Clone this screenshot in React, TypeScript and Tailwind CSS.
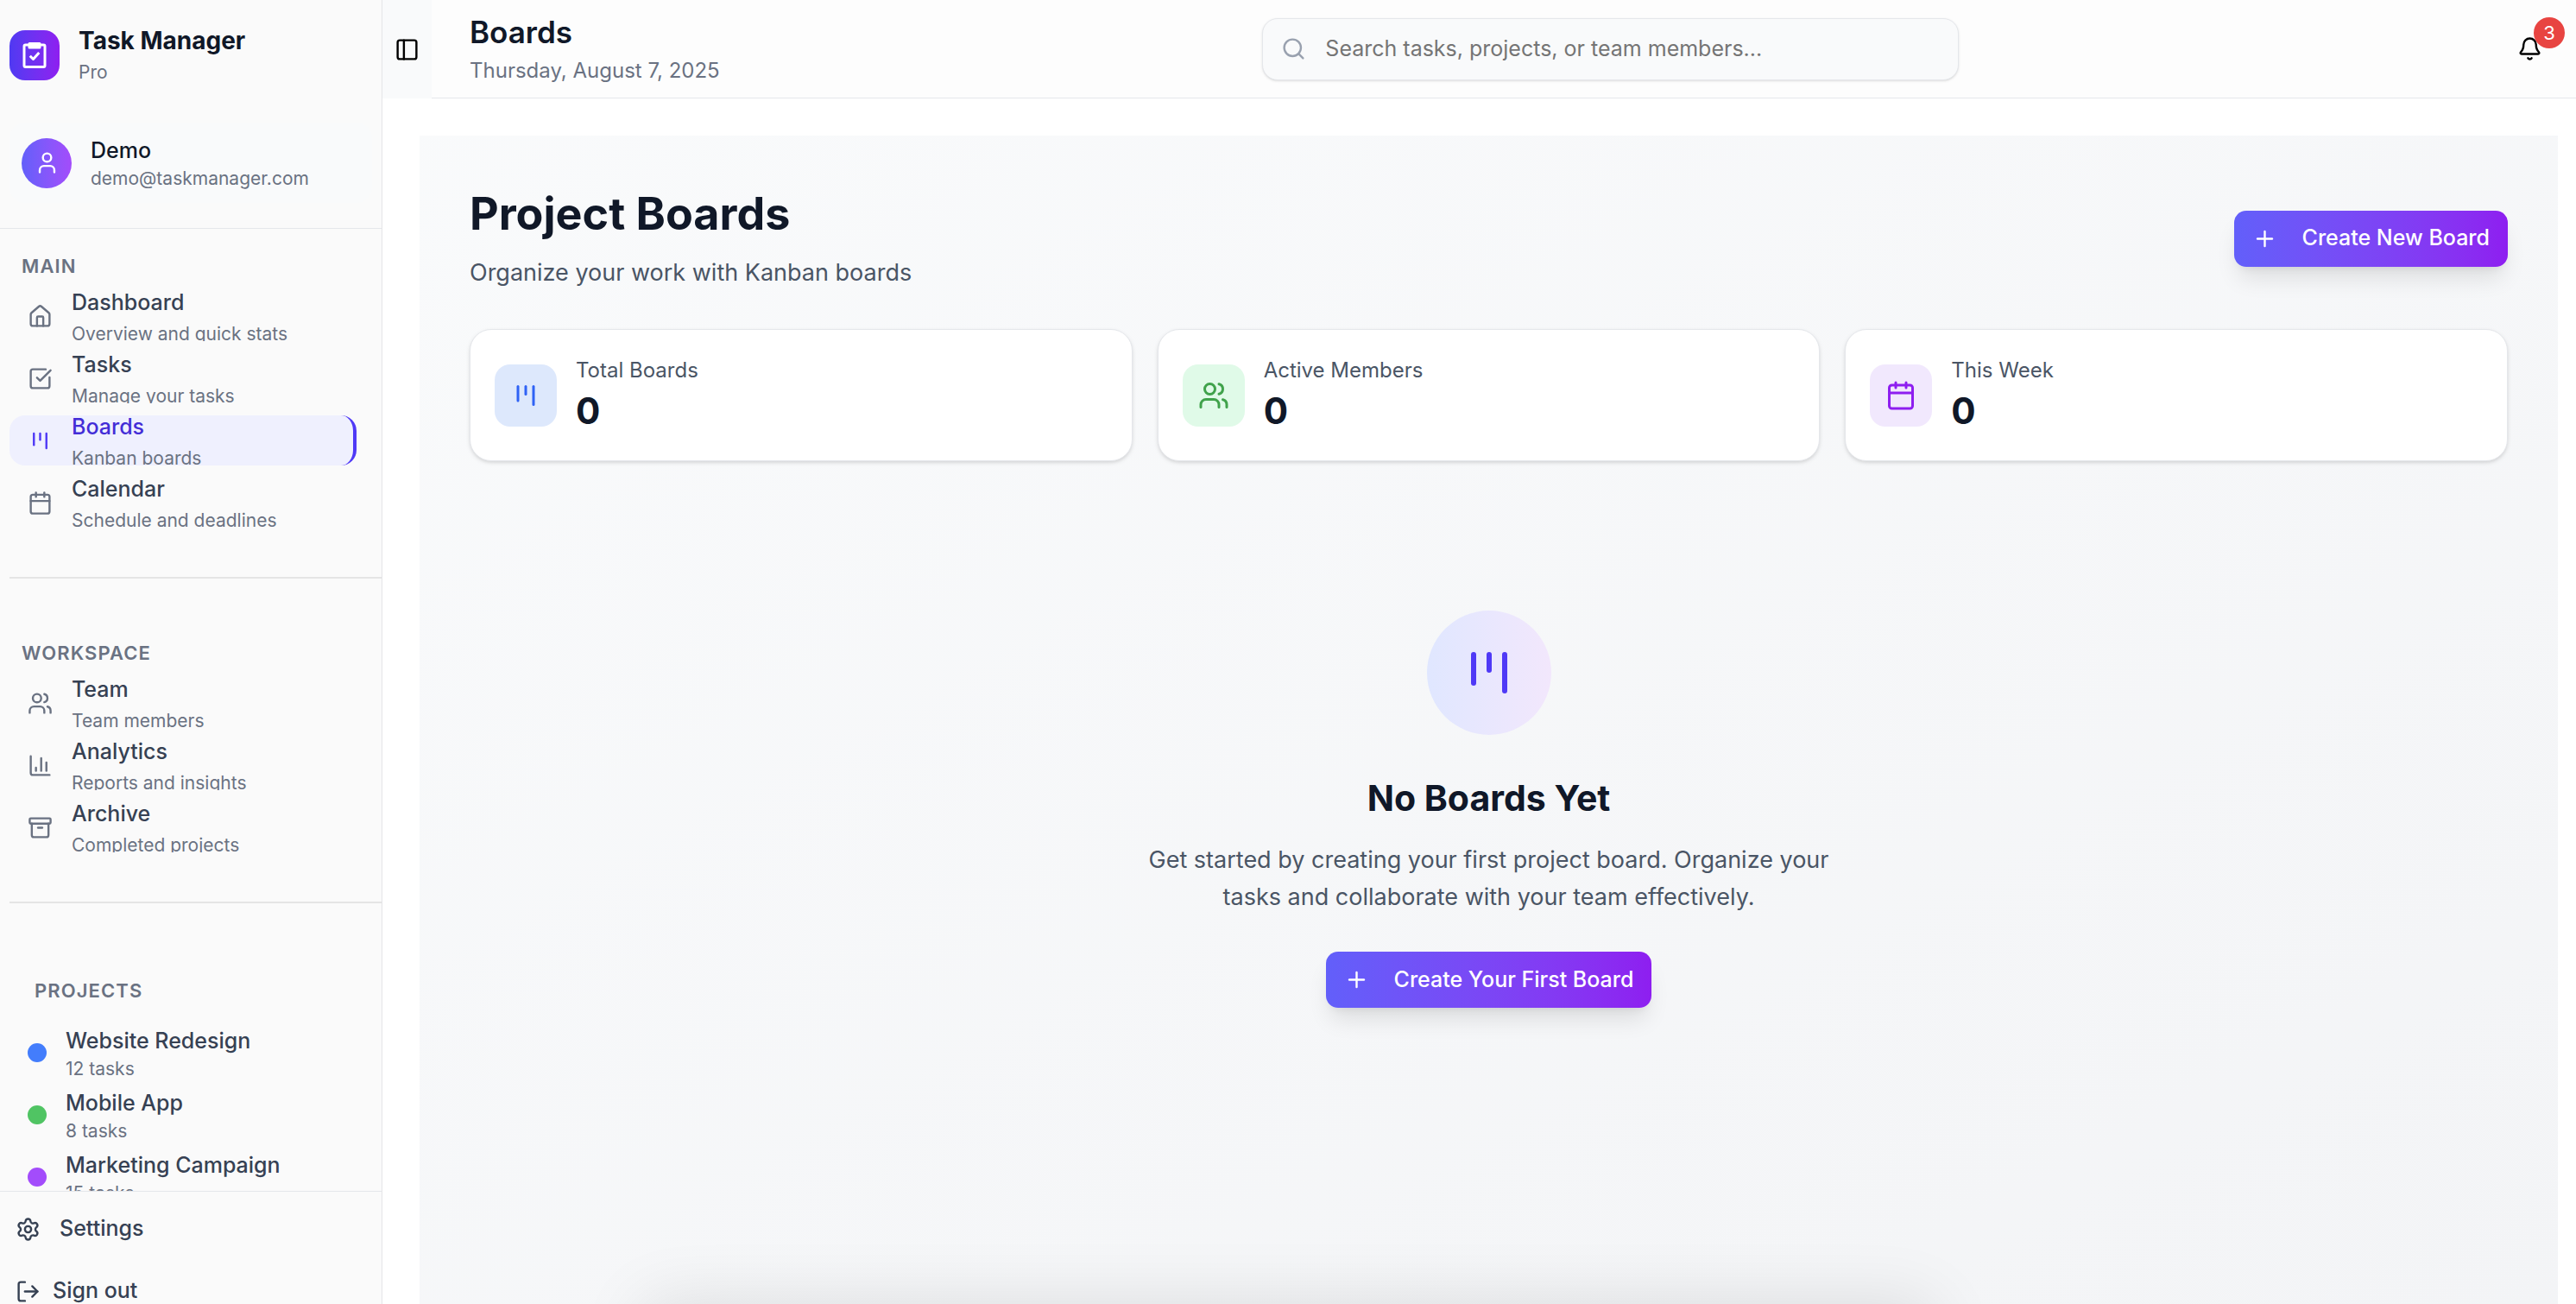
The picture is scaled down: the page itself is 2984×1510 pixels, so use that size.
import type { ReactNode } from "react";
import {
  Archive,
  Bell,
  Calendar,
  House,
  LogOut,
  PanelLeft,
  Plus,
  Search,
  Settings,
  SquareCheckBig,
  User,
  Users,
} from "lucide-react";

type IconProps = { className?: string };

const strokeProps = {
  viewBox: "0 0 24 24",
  fill: "none",
  stroke: "currentColor",
  strokeWidth: 2,
  strokeLinecap: "round" as const,
  strokeLinejoin: "round" as const,
  "aria-hidden": true,
};

function KanbanIcon({ className }: IconProps) {
  return (
    <svg {...strokeProps} className={className}>
      <path d="M6 5v11" />
      <path d="M12 5v6" />
      <path d="M18 5v14" />
    </svg>
  );
}

function ChartIcon({ className }: IconProps) {
  return (
    <svg {...strokeProps} className={className}>
      <path d="M3 3v16a2 2 0 0 0 2 2h16" />
      <path d="M18 17V9" />
      <path d="M13 17V5" />
      <path d="M8 17v-3" />
    </svg>
  );
}

function LogoIcon({ className }: IconProps) {
  return (
    <svg {...strokeProps} strokeLinecap="butt" className={className}>
      <rect x="4" y="4" width="16" height="17" rx="1" />
      <path d="M8 3h8v3H8z" fill="currentColor" />
      <path d="m8.500 12.500 2.500 2.500 4.500-5" />
    </svg>
  );
}

type NavEntry = {
  title: string;
  hint: string;
  icon: (p: IconProps) => ReactNode;
  active?: boolean;
};

const mainNav: NavEntry[] = [
  { title: "Dashboard", hint: "Overview and quick stats", icon: (p) => <House {...p} /> },
  { title: "Tasks", hint: "Manage your tasks", icon: (p) => <SquareCheckBig {...p} /> },
  { title: "Boards", hint: "Kanban boards", icon: (p) => <KanbanIcon {...p} />, active: true },
  { title: "Calendar", hint: "Schedule and deadlines", icon: (p) => <Calendar {...p} /> },
];

const workspaceNav: NavEntry[] = [
  { title: "Team", hint: "Team members", icon: (p) => <Users {...p} /> },
  { title: "Analytics", hint: "Reports and insights", icon: (p) => <ChartIcon {...p} /> },
  { title: "Archive", hint: "Completed projects", icon: (p) => <Archive {...p} /> },
];

const projects = [
  { name: "Website Redesign", tasks: "12 tasks", dot: "bg-[#437dfc]" },
  { name: "Mobile App", tasks: "8 tasks", dot: "bg-[#50c463]" },
  { name: "Marketing Campaign", tasks: "15 tasks", dot: "bg-[#a34cfb]" },
];

function NavItem({ item }: { item: NavEntry }) {
  return (
    <li>
      <a
        href="#"
        aria-current={item.active ? "page" : undefined}
        className={
          item.active
            ? "flex h-[58px] items-center gap-[22px] overflow-hidden rounded-[18px] border-r-4 border-[#4f39f6] bg-[#eff0fe] pl-[21px]"
            : "flex h-[58px] items-center gap-[22px] overflow-hidden rounded-[18px] pl-[21px]"
        }
      >
        {item.icon({
          className: item.active
            ? "size-[29px] shrink-0 text-[#4f39f6]"
            : "size-[29px] shrink-0 text-gray-500",
        })}
        <span className="flex shrink-0 flex-col gap-1">
          <span
            className={
              item.active
                ? "text-[25px] leading-9 font-medium text-indigo-700"
                : "text-[25px] leading-9 font-medium text-gray-700"
            }
          >
            {item.title}
          </span>
          <span className="text-[21px] leading-[29px] text-gray-500">{item.hint}</span>
        </span>
      </a>
    </li>
  );
}

function NavGroup({ label, items }: { label: string; items: NavEntry[] }) {
  return (
    <section aria-label={label} className="pr-[29px]">
      <h2 className="pl-[14px] text-[22px] leading-[29px] font-semibold tracking-wider text-gray-500 uppercase">
        {label}
      </h2>
      <ul className="mt-[14px] flex flex-col gap-[14px]">
        {items.map((item) => (
          <NavItem key={item.title} item={item} />
        ))}
      </ul>
    </section>
  );
}

function Sidebar() {
  return (
    <aside className="flex h-full w-[443px] shrink-0 flex-col border-r border-[#e5e5e8] bg-[#fafafa]">
      <div className="shrink-0 border-b border-gray-200 px-[11px] pt-[29px] pb-[29px]">
        <div className="flex h-[69px] items-center gap-[22px]">
          <div className="flex size-[58px] items-center justify-center rounded-[18px] bg-linear-to-r from-[#4f39f2] to-[#8e1ef0] text-white">
            <LogoIcon className="size-9" />
          </div>
          <div className="flex flex-col gap-1">
            <span className="text-[28px] leading-9 font-bold text-gray-900">Task Manager</span>
            <span className="text-[21px] leading-[29px] text-gray-500">Pro</span>
          </div>
        </div>
        <div className="mt-11 flex items-center gap-[22px] rounded-[18px] bg-gray-50 p-[14px]">
          <div className="flex size-[58px] items-center justify-center rounded-full bg-linear-to-r from-[#625ffa] to-[#a34cfb] text-white">
            <User className="size-[29px]" />
          </div>
          <div className="flex flex-col">
            <span className="text-[25px] leading-9 font-medium text-gray-900">Demo</span>
            <span className="text-[21px] leading-[29px] text-gray-500">demo@taskmanager.com</span>
          </div>
        </div>
      </div>

      <nav className="min-h-0 flex-1 overflow-hidden pt-[29px] pl-[11px]">
        <NavGroup label="Main" items={mainNav} />
        <hr className="mt-[57px] mb-[72px] border-t-2 border-[#e5e5e5]" />
        <NavGroup label="Workspace" items={workspaceNav} />
        <hr className="mt-[57px] mb-[87px] border-t-2 border-[#e5e5e5]" />
        <section aria-label="Projects">
          <h2 className="pl-[29px] text-[22px] leading-[29px] font-semibold tracking-wider text-gray-500 uppercase">
            Projects
          </h2>
          <ul className="mt-7 flex flex-col gap-[14px]">
            {projects.map((p) => (
              <li key={p.name}>
                <a href="#" className="flex h-[58px] items-center gap-[22px] pl-[21px]">
                  <span className={`size-[22px] shrink-0 rounded-full ${p.dot}`} />
                  <span className="flex shrink-0 flex-col">
                    <span className="text-[25px] leading-9 font-medium text-gray-700">{p.name}</span>
                    <span className="text-[21px] leading-[29px] text-gray-500">{p.tasks}</span>
                  </span>
                </a>
              </li>
            ))}
          </ul>
        </section>
      </nav>

      <div className="h-[131px] shrink-0 border-t border-gray-200 px-[18px] pt-[14px] text-[25px] font-medium text-gray-700">
        <button type="button" className="flex h-[58px] w-full items-center gap-[22px] text-left">
          <Settings className="size-[29px]" />
          Settings
        </button>
        <button type="button" className="mt-[14px] flex h-[58px] w-full items-center gap-[14px] text-left">
          <LogOut className="size-[29px]" />
          Sign out
        </button>
      </div>
    </aside>
  );
}

function TopBar() {
  return (
    <div className="flex h-[114px] shrink-0">
      <div className="flex w-[57px] items-center justify-center bg-gray-50">
        <button type="button" aria-label="Toggle sidebar" className="text-black">
          <PanelLeft className="size-[29px]" />
        </button>
      </div>
      <header className="flex flex-1 items-center border-b border-gray-200 bg-[#fdfdfd] pr-[21px] pl-11">
        <div>
          <h1 className="text-[35px] leading-[46px] font-semibold text-gray-900">Boards</h1>
          <p className="mt-1 text-[24px] leading-9 text-gray-500">Thursday, August 7, 2025</p>
        </div>
        <div className="flex flex-1 justify-center">
          <label className="flex h-[72px] w-full max-w-[807px] items-center gap-[22px] rounded-[18px] border border-gray-200 bg-gray-50 pl-[21px] shadow-sm">
            <Search className="size-[29px] shrink-0 text-gray-400" />
            <input
              type="search"
              aria-label="Search"
              placeholder="Search tasks, projects, or team members..."
              className="min-w-0 flex-1 bg-transparent text-[25px] outline-none placeholder:text-[#757575]"
            />
          </label>
        </div>
        <button
          type="button"
          aria-label="Notifications, 3 unread"
          className="relative flex size-[65px] items-center justify-center text-black"
        >
          <Bell className="size-[29px]" />
          <span className="absolute -top-1 -right-2 flex size-9 items-center justify-center rounded-full bg-[#e84441] text-[22px] text-white">
            3
          </span>
        </button>
      </header>
    </div>
  );
}

function CreateButton({ children }: { children: ReactNode }) {
  return (
    <button
      type="button"
      className="flex h-[65px] items-center gap-[29px] rounded-[14px] bg-linear-to-r from-[#625ffa] to-[#8e1ef0] px-[21px] text-[25px] font-medium text-white shadow-[0_18px_27px_-5px_rgba(0,0,0,0.1),0_7px_11px_-7px_rgba(0,0,0,0.1)]"
    >
      <Plus className="size-[29px]" />
      {children}
    </button>
  );
}

function StatCard({ label, value, tint, icon }: { label: string; value: string; tint: string; icon: ReactNode }) {
  return (
    <div className="flex h-[153px] items-center gap-[22px] rounded-[25px] border border-gray-200 bg-white px-7 shadow-[0_2px_5px_rgba(0,0,0,0.1),0_2px_4px_-2px_rgba(0,0,0,0.1)]">
      <div className={`flex size-[72px] items-center justify-center rounded-[18px] ${tint}`}>{icon}</div>
      <div>
        <p className="text-[24px] leading-9 text-gray-600">{label}</p>
        <p className="text-[42px] leading-[58px] font-bold text-gray-900">{value}</p>
      </div>
    </div>
  );
}

function BoardsPage() {
  return (
    <main className="mt-[43px] mr-[21px] ml-[43px] min-h-0 flex-1 overflow-hidden bg-linear-to-br from-gray-50 to-gray-100 px-[58px] pt-[58px]">
      <div className="flex items-center justify-between">
        <div>
          <h2 className="text-[52px] leading-[65px] font-bold text-gray-900">Project Boards</h2>
          <p className="mt-[14px] text-[27px] leading-[43px] text-gray-600">Organize your work with Kanban boards</p>
        </div>
        <CreateButton>Create New Board</CreateButton>
      </div>

      <div className="mt-11 grid grid-cols-3 gap-[29px]">
        <StatCard
          label="Total Boards"
          value="0"
          tint="bg-[#dde8fc] text-[#2f62f5]"
          icon={<KanbanIcon className="size-9" />}
        />
        <StatCard
          label="Active Members"
          value="0"
          tint="bg-[#e0fae8] text-[#40a24b]"
          icon={<Users className="size-9" />}
        />
        <StatCard
          label="This Week"
          value="0"
          tint="bg-[#f1e8fd] text-[#8e1ef0]"
          icon={<Calendar className="size-9" />}
        />
      </div>

      <section className="mt-[173px] flex flex-col items-center">
        <div className="flex size-36 items-center justify-center rounded-full bg-linear-to-r from-[#e0e7ff] to-[#f2e7fc] text-[#4f39f6]">
          <KanbanIcon className="size-[72px]" />
        </div>
        <h3 className="mt-11 text-[41px] leading-[58px] font-bold text-gray-900">No Boards Yet</h3>
        <p className="mt-[21px] max-w-[807px] text-center text-[27px] leading-[43px] text-gray-600">
          Get started by creating your first project board. Organize your tasks and collaborate with your team
          effectively.
        </p>
        <div className="mt-[42px]">
          <CreateButton>Create Your First Board</CreateButton>
        </div>
      </section>
    </main>
  );
}

export default function App() {
  return (
    <div className="flex h-screen overflow-hidden bg-white font-['Inter',sans-serif] antialiased">
      <Sidebar />
      <div className="flex min-w-0 flex-1 flex-col">
        <TopBar />
        <BoardsPage />
      </div>
      <div className="pointer-events-none fixed inset-x-0 top-full mx-auto h-24 w-1/2 shadow-[0_0_80px_rgba(0,0,0,0.11)]" />
    </div>
  );
}
